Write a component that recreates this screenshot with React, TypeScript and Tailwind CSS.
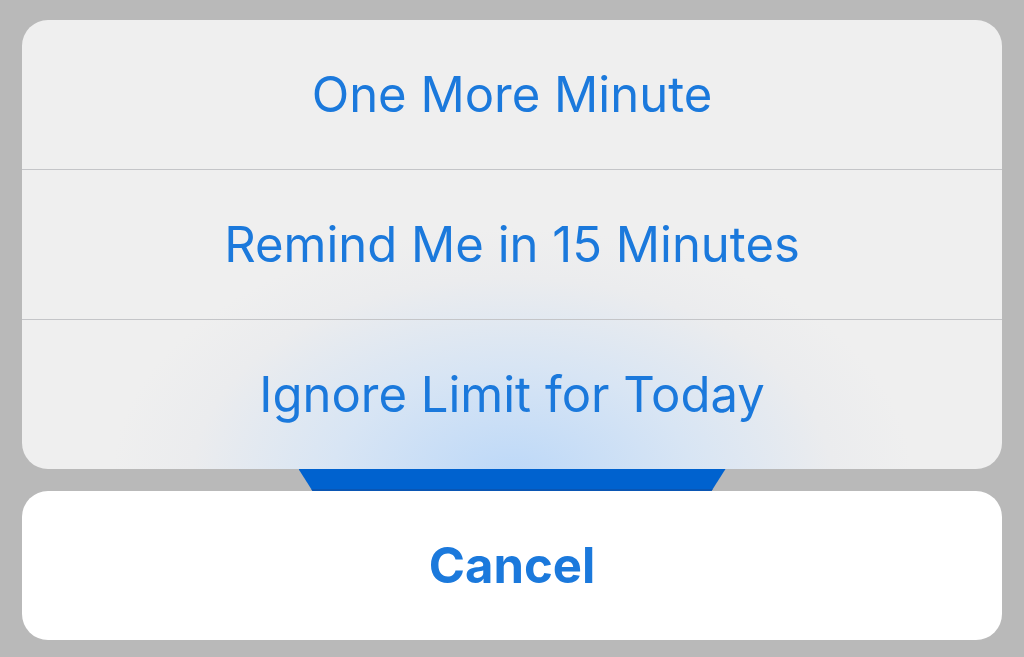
const actions = ["One More Minute", "Remind Me in 15 Minutes", "Ignore Limit for Today"];

export default function App() {
  return (
    <div className="w-[1024px] h-[657px] bg-[#b9b9b9] px-[22px] pt-[20px] font-['Inter','Liberation_Sans',sans-serif] overflow-hidden">
      {/* Action sheet */}
      <div className="rounded-[26px] overflow-hidden bg-[radial-gradient(ellipse_400px_250px_at_50%_102%,#bcd8f8_0%,#d8e5f4_45%,#ebecee_80%,#efefef_100%)]">
        {actions.map((label, i) => (
          <div
            key={label}
            className={
              i === 0
                ? "h-[149px] flex items-center justify-center"
                : "h-[150px] flex items-center justify-center border-t border-[#c4c5c8]"
            }
          >
            <span className="text-[49px] leading-none text-[#1b79dc] pb-[1px]">{label}</span>
          </div>
        ))}
      </div>

      {/* Button peeking out behind the sheet */}
      <div className="h-[22px] flex justify-center">
        <div className="w-[427px] h-[22px] bg-[#0062cf] border-b-2 border-[#0a56b4] [clip-path:polygon(0_0,100%_0,calc(100%-14px)_100%,14px_100%)]" />
      </div>

      {/* Cancel */}
      <div className="h-[149px] rounded-[26px] bg-white flex items-center justify-center">
        <span className="text-[49px] leading-none font-bold text-[#1b79dc] pb-[1px]">Cancel</span>
      </div>
    </div>
  );
}
